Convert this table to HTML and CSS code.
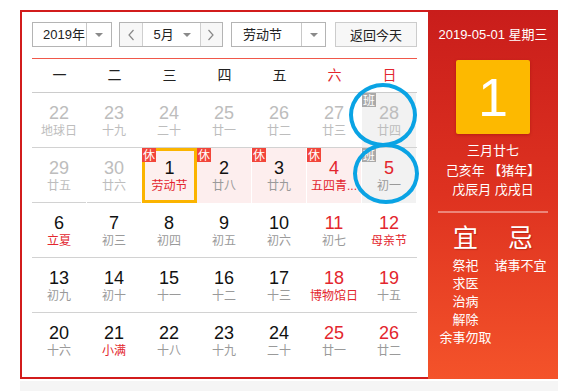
FILE: index.html
```html
<!DOCTYPE html>
<html lang="zh-CN">
<head>
<meta charset="utf-8">
<title>万年历</title>
<link rel="stylesheet" href="styles.css">
</head>
<body>
<div class="page">
  <div class="widget">
    <div class="main">
      <div class="toolbar">
        <div class="select year"><span class="val">2019年</span><span class="drop"><i class="tri"></i></span></div>
        <div class="monthgroup">
          <span class="nav"><svg width="8" height="12" viewBox="0 0 8 12"><path d="M6.5 1 L2 6 L6.5 11" fill="none" stroke="#888" stroke-width="1.2"/></svg></span>
          <span class="month"><span class="val">5月</span><i class="tri"></i></span>
          <span class="nav"><svg width="8" height="12" viewBox="0 0 8 12"><path d="M1.5 1 L6 6 L1.5 11" fill="none" stroke="#888" stroke-width="1.2"/></svg></span>
        </div>
        <div class="select holiday"><span class="val">劳动节</span><span class="drop"><i class="tri"></i></span></div>
        <div class="today-btn">返回今天</div>
      </div>
      <div class="weekhead">
        <span>一</span><span>二</span><span>三</span><span>四</span><span>五</span><span class="red">六</span><span class="red">日</span>
      </div>
      <div class="week">
        <div class="day other"><b>22</b><span>地球日</span></div>
        <div class="day other"><b>23</b><span>十九</span></div>
        <div class="day other"><b>24</b><span>二十</span></div>
        <div class="day other"><b>25</b><span>廿一</span></div>
        <div class="day other"><b>26</b><span>廿二</span></div>
        <div class="day other"><b>27</b><span>廿三</span></div>
        <div class="day other work"><i class="tag ban">班</i><b>28</b><span>廿四</span></div>
      </div>
      <div class="week">
        <div class="day other"><b>29</b><span>廿五</span></div>
        <div class="day other"><b>30</b><span>廿六</span></div>
        <div class="day hol today"><i class="tag">休</i><b>1</b><span class="fest">劳动节</span></div>
        <div class="day hol"><i class="tag">休</i><b>2</b><span>廿八</span></div>
        <div class="day hol"><i class="tag">休</i><b>3</b><span>廿九</span></div>
        <div class="day hol"><i class="tag">休</i><b class="red">4</b><span class="fest">五四青...</span></div>
        <div class="day work"><i class="tag ban">班</i><b class="red">5</b><span>初一</span></div>
      </div>
      <div class="week">
        <div class="day"><b>6</b><span class="fest">立夏</span></div>
        <div class="day"><b>7</b><span>初三</span></div>
        <div class="day"><b>8</b><span>初四</span></div>
        <div class="day"><b>9</b><span>初五</span></div>
        <div class="day"><b>10</b><span>初六</span></div>
        <div class="day"><b class="red">11</b><span>初七</span></div>
        <div class="day"><b class="red">12</b><span class="fest">母亲节</span></div>
      </div>
      <div class="week">
        <div class="day"><b>13</b><span>初九</span></div>
        <div class="day"><b>14</b><span>初十</span></div>
        <div class="day"><b>15</b><span>十一</span></div>
        <div class="day"><b>16</b><span>十二</span></div>
        <div class="day"><b>17</b><span>十三</span></div>
        <div class="day"><b class="red">18</b><span class="fest">博物馆日</span></div>
        <div class="day"><b class="red">19</b><span>十五</span></div>
      </div>
      <div class="week last">
        <div class="day"><b>20</b><span>十六</span></div>
        <div class="day"><b>21</b><span class="fest">小满</span></div>
        <div class="day"><b>22</b><span>十八</span></div>
        <div class="day"><b>23</b><span>十九</span></div>
        <div class="day"><b>24</b><span>二十</span></div>
        <div class="day"><b class="red">25</b><span>廿一</span></div>
        <div class="day"><b class="red">26</b><span>廿二</span></div>
      </div>
    </div>
    <div class="side">
      <div class="side-date">2019-05-01 星期三</div>
      <div class="bigday">1</div>
      <div class="lunar">
        <div>三月廿七</div>
        <div>己亥年 【猪年】</div>
        <div>戊辰月 戊戌日</div>
      </div>
      <div class="divider"></div>
      <div class="yiji">
        <div class="col">
          <div class="head">宜</div>
          <div>祭祀</div>
          <div>求医</div>
          <div>治病</div>
          <div>解除</div>
          <div>余事勿取</div>
        </div>
        <div class="col">
          <div class="head">忌</div>
          <div>诸事不宜</div>
        </div>
      </div>
    </div>
  </div>
  <div class="strip"></div>
  <div class="ring ring1"></div>
  <div class="ring ring2"></div>
</div>
</body>
</html>
```

FILE: styles.css
```css
* { box-sizing: border-box; }
body {
  margin: 0;
  background: #fff;
  font-family: "Liberation Sans", "Noto Sans CJK SC", sans-serif;
  color: #333;
}
.page {
  position: relative;
  padding: 10px 0 0 20px;
}
.widget {
  display: flex;
  width: 538px;
  height: 369px;
}
.main {
  width: 408px;
  border: 2px solid #d21c1c;
  border-right: none;
  padding: 10px 11px 10px 10px;
}
.toolbar {
  display: flex;
  padding-bottom: 11px;
  border-bottom: 1px solid #f0584a;
  box-sizing: content-box;
  height: 25px;
}
.select, .monthgroup, .today-btn {
  height: 25px;
  border: 1px solid #b4b4b4;
  display: flex;
  align-items: center;
  font-size: 13px;
  color: #222;
}
.select .val {
  flex: 1;
  padding-left: 10px;
  line-height: 23px;
}
.select .drop {
  width: 25px;
  height: 23px;
  border-left: 1px solid #c8c8c8;
  display: flex;
  align-items: center;
  justify-content: center;
}
.tri {
  display: block;
  width: 0;
  height: 0;
  border-left: 4px solid transparent;
  border-right: 4px solid transparent;
  border-top: 4px solid #8a8a8a;
}
.year { width: 80px; }
.monthgroup {
  width: 104px;
  margin-left: 7px;
}
.nav {
  width: 23px;
  height: 23px;
  background: #f7f7f7;
  display: flex;
  align-items: center;
  justify-content: center;
}
.nav:last-child { width: 22px; }
.month {
  width: 59px;
  height: 23px;
  border-left: 1px solid #cfcfcf;
  border-right: 1px solid #cfcfcf;
  display: flex;
  align-items: center;
  padding: 0 9px 0 10px;
}
.month .val { flex: 1; line-height: 23px; }
.holiday {
  width: 95px;
  margin-left: 8px;
}
.holiday .val { padding-left: 11px; }
.holiday .drop { width: 24px; }
.today-btn {
  width: 82px;
  margin-left: 9px;
  justify-content: center;
  background: #f7f7f7;
  border-color: #cccccc;
  font-size: 13px;
}
.weekhead {
  display: grid;
  grid-template-columns: repeat(7, 55px);
  height: 34px;
  border-bottom: 1px solid #cccccc;
  text-align: center;
  line-height: 33px;
  font-size: 14px;
  color: #222;
}
.red { color: #e3262e; }
.week {
  display: grid;
  grid-template-columns: repeat(7, 55px);
  height: 55px;
  border-bottom: 1px solid #d2d2d2;
}
.week.last { border-bottom: none; height: 54px; }
.day {
  position: relative;
  border-right: 1px solid #fff;
  text-align: center;
  padding-top: 10px;
}
.day b {
  display: block;
  font-weight: normal;
  font-size: 18px;
  line-height: 20px;
  color: #111;
}
.day span {
  display: block;
  font-size: 12px;
  line-height: 16px;
  color: #9a9a9a;
  white-space: nowrap;
}
.day b.red { color: #e3262e; }
.day span.fest { color: #e3262e; }
.day.other b, .day.other span { color: #bdbdbd; }
.day.hol { background: #fdeeee; }
.day.work { background: #f2f2f2; }
.day.today {
  border: 3px solid #fbb400;
  padding-top: 7px;
  height: 55px;
  background: #fdf0ef;
}
.tag {
  position: absolute;
  left: 0;
  top: 0;
  width: 14px;
  height: 14px;
  background: #f2453a;
  color: #fff;
  font-style: normal;
  font-size: 12px;
  line-height: 14px;
  text-align: center;
  font-family: "Noto Sans CJK SC", sans-serif;
}
.day.today .tag { left: -3px; top: -3px; }
.tag.ban { background: #a9a9a9; }
.side {
  width: 130px;
  background: linear-gradient(180deg, #c91d1b 0%, #de3220 50%, #f4532a 100%);
  color: #fff;
  text-align: center;
  padding-top: 16px;
}
.side-date {
  font-size: 13px;
  line-height: 18px;
}
.bigday {
  width: 74px;
  height: 74px;
  margin: 16px auto 0;
  background: #fdb900;
  border-radius: 2px;
  box-shadow: 0 1px 3px rgba(120, 0, 0, 0.35);
  font-size: 54px;
  line-height: 74px;
  color: #fff;
}
.lunar {
  margin-top: 7px;
  font-size: 13px;
  line-height: 19.5px;
}
.divider {
  height: 2px;
  margin: 11px 10px 0;
  background: rgba(255, 255, 255, 0.4);
}
.yiji {
  display: grid;
  grid-template-columns: 55px 55px;
  margin: 10px 10px 0;
  font-size: 13px;
  line-height: 18px;
}
.col div { white-space: nowrap; }
.col .head {
  font-size: 25px;
  line-height: 31px;
  margin-bottom: 3px;
  text-shadow: 1px 1px 1px rgba(120, 0, 0, 0.35);
}
.strip {
  width: 538px;
  height: 10px;
  margin-top: 2px;
  background: #f5f5f5;
}
.ring {
  position: absolute;
  border: 4px solid #0aa3e4;
  border-radius: 50%;
}
.ring1 { left: 349px; top: 83px; width: 68px; height: 64px; }
.ring2 { left: 353px; top: 143px; width: 66px; height: 61px; }
```
